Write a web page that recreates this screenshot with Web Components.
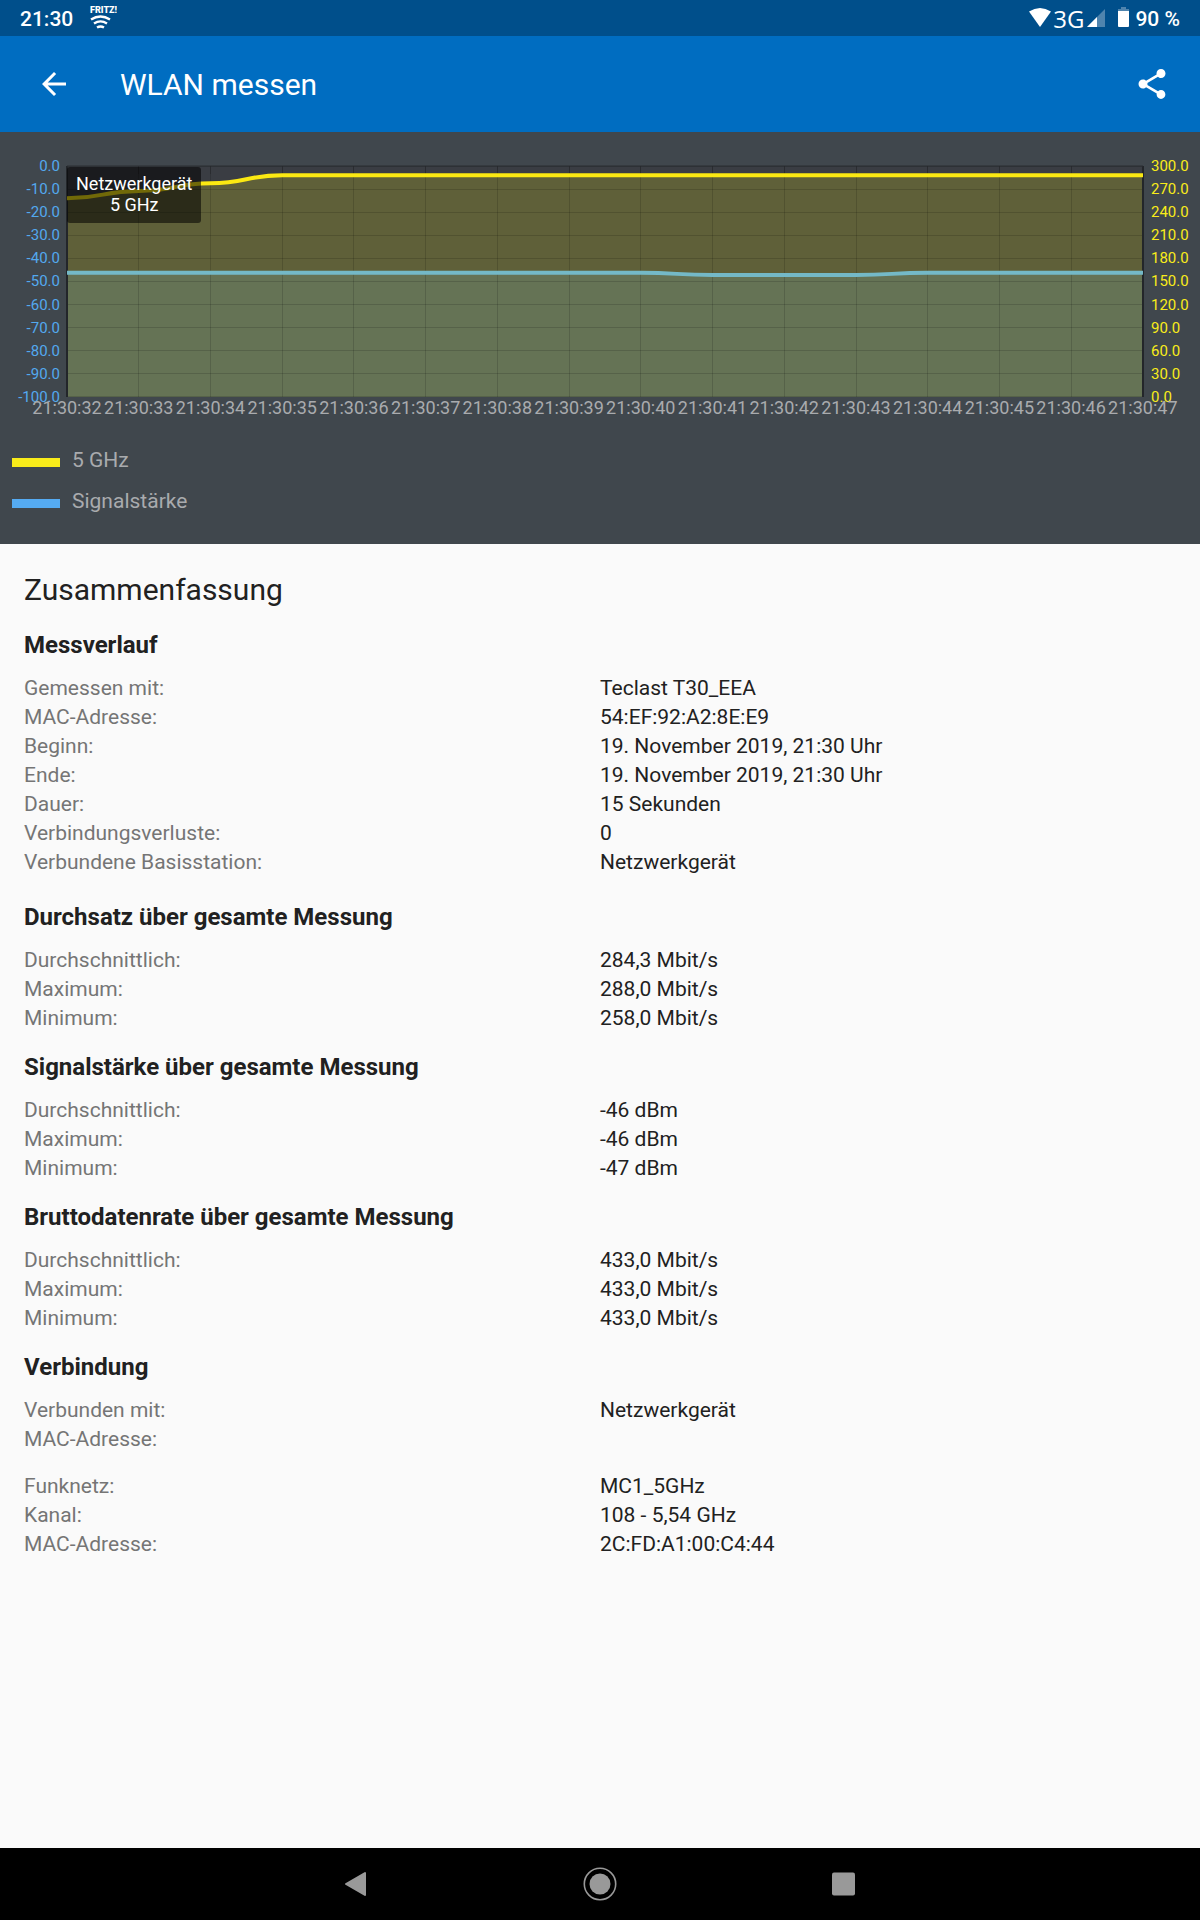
<!DOCTYPE html>
<html lang="de">
<head>
<meta charset="utf-8">
<meta name="viewport" content="width=device-width, initial-scale=1">
<title>WLAN messen</title>
<style>
  body { margin: 0; background: #fafafa; font-family: Roboto, "Noto Sans", sans-serif; }
</style>
</head>
<body>
<wlan-app></wlan-app>

<script>
const define = (name, html, setup) => {
  const template = document.createElement('template');
  template.innerHTML = html;
  customElements.define(name, class extends HTMLElement {
    constructor() {
      super();
      this.attachShadow({ mode: 'open' }).append(template.content.cloneNode(true));
    }
    connectedCallback() {
      if (setup && !this.ready) { this.ready = true; setup(this, this.shadowRoot); }
    }
  });
};

/* System status bar */
define('status-bar', `
<style>
  :host { display: flex; justify-content: space-between; align-items: center; height: 36px; padding: 0 20px;
    background: #004f8b; color: #fff; font-size: 21px; font-weight: 500; line-height: 24px; }
  .group { display: flex; align-items: center; }
  .group > span { padding-top: 1px; }
  svg { display: block; flex: none; }
  .fritz { margin-left: 16px; }
  .net { font: 400 24px/24px "Liberation Sans Narrow", "Open Sans", sans-serif; margin: 0 3px 0 1px; }
  .battery { margin: 0 6px 0 12px; }
</style>
<div class="group">
  <span>21:30</span>
  <svg class="fritz" width="28" height="36" viewBox="0 0 28 36" fill="none" stroke="#fff" stroke-width="2.4">
    <text x="1" y="13" fill="#fff" stroke="none" font-family="Roboto" font-size="9" font-weight="900">FRITZ!</text>
    <path d="M2 19.500Q11.500 13.500 21 19.500M5 23.500Q11.500 19.300 18 23.500M8 27.500Q11.500 25.400 15 27.500"/>
  </svg>
</div>
<div class="group">
  <svg width="24" height="36" viewBox="0 0 24 36" fill="#fff"><path d="M1 11.500Q12 4.500 23 11.500L12 27Z"/></svg>
  <span class="net">3G</span>
  <svg width="19" height="36" viewBox="0 0 19 36"><path d="M18 9V27H0Z" fill="#4f84ae"/><path d="M10 17V27H0Z" fill="#fff"/></svg>
  <svg class="battery" width="11" height="36" viewBox="0 0 11 36"><path d="M3 7H8V9H11V11H0V9H3Z" fill="#4f84ae"/><path d="M0 11H11V26Q11 27 10 27H1Q0 27 0 26Z" fill="#fff"/></svg>
  <span>90 %</span>
</div>`);

/* Toolbar with back and share actions */
define('app-bar', `
<style>
  :host { display: flex; align-items: center; height: 96px; padding: 0 24px 0 30px; background: #006dc1; color: #fff; }
  button { display: flex; padding: 6px; border: 0; background: none; color: inherit; cursor: pointer; }
  h1 { flex: 1; margin: 0 0 0 42px; padding-top: 2px; font-size: 30px; line-height: 36px; font-weight: 400; }
  svg { display: block; fill: currentColor; }
</style>
<button aria-label="Zurück"><svg width="36" height="36" viewBox="0 0 24 24"><path d="M20 11H7.830l5.590-5.590L12 4l-8 8 8 8 1.410-1.410L7.830 13H20v-2z"/></svg></button>
<h1><slot></slot></h1>
<button aria-label="Teilen"><svg width="36" height="36" viewBox="0 0 24 24"><path d="M18 16.080c-.76 0-1.440.3-1.960.77L8.910 12.700c.05-.23.09-.46.09-.7s-.04-.47-.09-.7l7.050-4.110c.54.5 1.250.81 2.040.81 1.660 0 3-1.340 3-3s-1.340-3-3-3-3 1.340-3 3c0 .24.040.47.090.7L8.040 9.810C7.500 9.310 6.790 9 6 9c-1.660 0-3 1.340-3 3s1.340 3 3 3c.79 0 1.500-.31 2.040-.81l7.120 4.160c-.05.21-.08.43-.08.65 0 1.610 1.310 2.920 2.920 2.920s2.920-1.310 2.920-2.920-1.310-2.920-2.920-2.920z"/></svg></button>`);

/* Throughput and signal chart */
define('signal-chart', `
<style>
  :host { display: block; padding: 34px 0 31px; background: #40474d; }
  .chart { display: grid; grid-template-columns: 67px minmax(0, 1fr) 57px; grid-template-rows: 231px 51px; }
  .axis { display: flex; flex-direction: column; justify-content: space-between; font-size: 15px; }
  .axis span { height: 0; display: flex; align-items: center; }
  .left { color: #53a9ef; padding-right: 7px; }
  .left span { justify-content: flex-end; }
  .right { color: #f9ec1a; padding-left: 8px; }
  .plot { position: relative; background: #3a3d43; }
  .plot svg { display: block; width: 100%; height: 100%; overflow: visible; fill: none; }
  .plot svg * { vector-effect: non-scaling-stroke; }
  .grid { shape-rendering: crispEdges; stroke: rgba(0, 0, 0, .14); stroke-width: 1; }
  .tip { position: absolute; left: 0; top: 1px; box-sizing: border-box; padding: 6px 9px 8px; border-radius: 3px;
    background: rgba(0, 0, 0, .55); color: #fff; font-size: 18px; line-height: 21px; text-align: center; }
  .time { grid-column: 2; display: flex; justify-content: space-between; color: #a9abae; font-size: 18px; line-height: 21px; }
  .time span { width: 0; display: flex; justify-content: center; white-space: nowrap; }
  ul { list-style: none; margin: 0; padding: 0 12px; display: grid; row-gap: 17px; color: #a9abae; font-size: 21px; line-height: 24px; }
  li { display: flex; align-items: center; gap: 12px; }
  i { width: 48px; height: 9px; margin-top: 4px; background: var(--key); }
</style>
<div class="chart">
  <div class="axis left"></div>
  <div class="plot">
    <svg viewBox="0 0 15 100" preserveAspectRatio="none">
      <path fill="#5f6039" d="M0 14C.5 14 .5 10.800 1 10.800S1.500 7.500 2 7.500S2.500 4 3 4H15V100H0Z"/>
      <path fill="#657355" d="M0 46.200H8C8.500 46.200 8.500 47.200 9 47.200H11C11.500 47.200 11.500 46.200 12 46.200H15V100H0Z"/>
      <g class="grid"></g>
      <path stroke="#23262a" stroke-width="2" d="M0 0V100M15 0V100"/>
      <path stroke="#2b2e33" d="M0 0H15"/>
      <path stroke="#fbe912" stroke-width="4" d="M0 14C.5 14 .5 10.800 1 10.800S1.500 7.500 2 7.500S2.500 4 3 4H15"/>
      <path stroke="#74b9c7" stroke-width="4" d="M0 46.200H8C8.500 46.200 8.500 47.200 9 47.200H11C11.500 47.200 11.500 46.200 12 46.200H15"/>
    </svg>
    <div class="tip">Netzwerkgerät<br>5 GHz</div>
  </div>
  <div class="axis right"></div>
  <div class="time"></div>
</div>
<ul>
  <li><i style="--key: #f9ec1a"></i>5 GHz</li>
  <li><i style="--key: #55abf2"></i>Signalstärke</li>
</ul>`, (host, root) => {
  const labels = (selector, texts) => root.querySelector(selector).append(...texts.map(text => {
    const span = document.createElement('span');
    span.textContent = text;
    return span;
  }));
  const steps = [...Array(11).keys()];
  labels('.left', steps.map(i => (i ? '-' : '') + (i * 10).toFixed(1)));
  labels('.right', steps.map(i => (300 - i * 30).toFixed(1)));
  labels('.time', [...Array(16).keys()].map(i => '21:30:' + (32 + i)));
  let lines = '';
  for (let i = 0; i <= 10; i++) lines += `<path d="M0 ${i * 10}H15"/>`;
  for (let i = 1; i < 15; i++) lines += `<path d="M${i} 0V100"/><path d="M${i} 0V3.500"/>`;
  root.querySelector('.grid').innerHTML = lines;
});

/* One label with its value */
define('info-row', `
<style>
  :host { display: grid; grid-template-columns: 1fr 1fr; min-height: 29px; font-size: 21px; line-height: 29px; }
  .label { color: #757575; }
  .value { color: #212121; }
</style>
<span class="label"></span><span class="value"><slot></slot></span>`, (host, root) => {
  root.querySelector('.label').textContent = host.getAttribute('label') + ':';
});

/* Titled group of rows */
define('info-section', `
<style>
  :host { display: block; margin-bottom: 20px; }
  :host([wide]) { margin-bottom: 26px; }
  h3 { margin: 0 0 14px; font-size: 24px; line-height: 29px; font-weight: 700; color: #212121; }
  ::slotted(.spaced) { margin-top: 18px; }
</style>
<h3></h3>
<slot></slot>`, (host, root) => {
  root.querySelector('h3').textContent = host.getAttribute('heading');
});

define('summary-panel', `
<style>
  :host { display: block; flex: 1; padding: 28px 24px 0; background: #fafafa; }
  h2 { margin: 0 0 23px; font-size: 30px; line-height: 36px; font-weight: 400; color: #212121; }
</style>
<h2>Zusammenfassung</h2>
<slot></slot>`);

/* System navigation buttons */
define('nav-bar', `
<style>
  :host { display: flex; justify-content: center; height: 72px; background: #000; }
  button { flex: 0 1 244px; display: flex; align-items: center; justify-content: center; padding: 0; border: 0; background: none; cursor: pointer; }
</style>
<button aria-label="Zurück"><svg width="36" height="36" viewBox="0 0 36 36"><path d="M8 18L27 7V29Z" fill="#999" stroke="#999" stroke-width="2" stroke-linejoin="round"/></svg></button>
<button aria-label="Startseite"><svg width="36" height="36" viewBox="0 0 36 36"><circle cx="18" cy="18" r="15.700" fill="none" stroke="#999" stroke-width="1.600"/><circle cx="18" cy="18" r="10.500" fill="#999"/></svg></button>
<button aria-label="Übersicht"><svg width="36" height="36" viewBox="0 0 36 36"><rect x="6" y="6.500" width="23" height="23" rx="2" fill="#999"/></svg></button>`);

define('wlan-app', `
<style>
  :host { display: flex; flex-direction: column; min-height: 100vh; }
</style>
<status-bar></status-bar>
<app-bar>WLAN messen</app-bar>
<signal-chart></signal-chart>
<summary-panel>
  <info-section heading="Messverlauf" wide>
    <info-row label="Gemessen mit">Teclast T30_EEA</info-row>
    <info-row label="MAC-Adresse">54:EF:92:A2:8E:E9</info-row>
    <info-row label="Beginn">19. November 2019, 21:30 Uhr</info-row>
    <info-row label="Ende">19. November 2019, 21:30 Uhr</info-row>
    <info-row label="Dauer">15 Sekunden</info-row>
    <info-row label="Verbindungsverluste">0</info-row>
    <info-row label="Verbundene Basisstation">Netzwerkgerät</info-row>
  </info-section>
  <info-section heading="Durchsatz über gesamte Messung">
    <info-row label="Durchschnittlich">284,3 Mbit/s</info-row>
    <info-row label="Maximum">288,0 Mbit/s</info-row>
    <info-row label="Minimum">258,0 Mbit/s</info-row>
  </info-section>
  <info-section heading="Signalstärke über gesamte Messung">
    <info-row label="Durchschnittlich">-46 dBm</info-row>
    <info-row label="Maximum">-46 dBm</info-row>
    <info-row label="Minimum">-47 dBm</info-row>
  </info-section>
  <info-section heading="Bruttodatenrate über gesamte Messung">
    <info-row label="Durchschnittlich">433,0 Mbit/s</info-row>
    <info-row label="Maximum">433,0 Mbit/s</info-row>
    <info-row label="Minimum">433,0 Mbit/s</info-row>
  </info-section>
  <info-section heading="Verbindung">
    <info-row label="Verbunden mit">Netzwerkgerät</info-row>
    <info-row label="MAC-Adresse"></info-row>
    <info-row class="spaced" label="Funknetz">MC1_5GHz</info-row>
    <info-row label="Kanal">108 - 5,54 GHz</info-row>
    <info-row label="MAC-Adresse">2C:FD:A1:00:C4:44</info-row>
  </info-section>
</summary-panel>
<nav-bar></nav-bar>`);
</script>
</body>
</html>
